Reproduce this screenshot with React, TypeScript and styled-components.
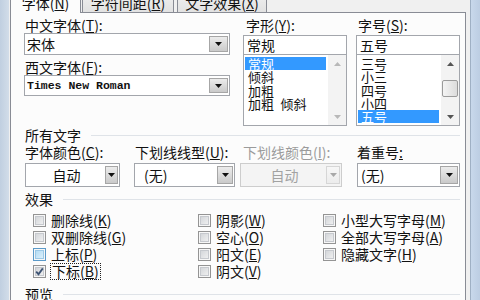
import React from 'react';
import styled, { createGlobalStyle } from 'styled-components';

const Global = createGlobalStyle`
  html, body { margin: 0; padding: 0; }
  body {
    width: 480px; height: 300px; overflow: hidden;
    background: #c5d5e8;
    font-family: "Noto Sans CJK SC", "Noto Sans", sans-serif;
    color: #111;
  }
`;

const Window = styled.div`
  display: flex;
  width: 480px;
  height: 300px;
  overflow: hidden;
`;

const LeftFrame = styled.div`
  flex: none;
  width: 9px;
  background: linear-gradient(90deg, #c0cfe0, #d2dde9);
`;

const RightFrame = styled.div`
  flex: none;
  width: 9px;
  border-left: 1px solid #9fb0c4;
  background: linear-gradient(90deg, #c8d8eb, #bccde2);
`;

const DialogBody = styled.div`
  flex: 1;
  display: flex;
  flex-direction: column;
  background: #f0f0f0;
  padding: 0 4px 0 1px;
`;

const TabStrip = styled.div`
  flex: none;
  height: 12px;
  display: flex;
  align-items: flex-end;
`;

const Tab = styled.div<{ $active?: boolean; $w: number; $ml: number }>`
  flex: none;
  box-sizing: border-box;
  width: ${p => p.$w}px;
  margin-left: ${p => p.$ml}px;
  height: ${p => (p.$active ? 27 : 26)}px;
  margin-bottom: ${p => (p.$active ? -1 : 0)}px;
  position: relative;
  z-index: ${p => (p.$active ? 1 : 0)};
  border: 1px solid #898c95;
  border-bottom: none;
  border-radius: 2px 2px 0 0;
  background: ${p => (p.$active ? '#fcfcfc' : 'linear-gradient(#f4f4f4, #e2e2e2)')};
  display: flex;
  align-items: flex-end;
  justify-content: center;
  padding-bottom: ${p => (p.$active ? 2 : 1)}px;
  font-size: 14px;
  line-height: 15px;
  white-space: nowrap;
`;

const TabPage = styled.div`
  flex: 1;
  box-sizing: border-box;
  border: 1px solid #898c95;
  border-bottom: none;
  background: #fcfcfc;
  padding: 5px 5px 0 13px;
  display: flex;
  flex-direction: column;
`;

const Acc = styled.span`
  text-decoration: underline;
  text-underline-offset: 1px;
`;

const TopRow = styled.div`
  display: flex;
`;

const Col = styled.div<{ $w: number; $ml?: number }>`
  display: flex;
  flex-direction: column;
  flex: none;
  width: ${p => p.$w}px;
  margin-left: ${p => p.$ml ?? 0}px;
`;

const Label = styled.div<{ $mt?: number; $lp?: number; $disabled?: boolean }>`
  height: 15px;
  line-height: 15px;
  font-size: 14px;
  margin-top: ${p => p.$mt ?? 0}px;
  padding-left: ${p => p.$lp ?? 1}px;
  white-space: nowrap;
  color: ${p => (p.$disabled ? '#9b9b9b' : '#111')};
`;

const Combo = styled.div<{ $h: number; $mt?: number; $disabled?: boolean }>`
  box-sizing: border-box;
  display: flex;
  align-items: stretch;
  height: ${p => p.$h}px;
  margin-top: ${p => p.$mt ?? 0}px;
  border: 1px solid ${p => (p.$disabled ? '#cdcdcd' : '#a3a6ac')};
  background: ${p => (p.$disabled ? '#f4f4f4' : '#ffffff')};
  padding: 2px 1px 2px 0;
`;

const ComboText = styled.div<{ $center?: boolean; $pad?: number; $mono?: boolean; $disabled?: boolean }>`
  flex: 1;
  display: flex;
  align-items: center;
  justify-content: ${p => (p.$center ? 'center' : 'flex-start')};
  padding-left: ${p => p.$pad ?? 2}px;
  font-size: ${p => (p.$mono ? '11.5px' : '14px')};
  font-weight: ${p => (p.$mono ? 700 : 400)};
  font-family: ${p => (p.$mono ? '"Liberation Mono", monospace' : 'inherit')};
  color: ${p => (p.$disabled ? '#a2a2a2' : '#111')};
  white-space: nowrap;
  overflow: hidden;
`;

const DropBtn = styled.div<{ $w: number; $disabled?: boolean }>`
  flex: none;
  box-sizing: border-box;
  width: ${p => p.$w}px;
  border: 1px solid ${p => (p.$disabled ? '#d6d6d6' : '#a6a6a6')};
  background: ${p => (p.$disabled ? 'linear-gradient(#f7f7f7, #ececec)' : 'linear-gradient(#ececec, #cacaca)')};
  display: flex;
  align-items: center;
  justify-content: center;
`;

const EditBox = styled.div`
  box-sizing: border-box;
  height: 20px;
  margin-top: 2px;
  border: 1px solid #a3a6ac;
  background: #fff;
  display: flex;
  align-items: center;
  padding-left: 3px;
  font-size: 14px;
`;

const ListBox = styled.div`
  box-sizing: border-box;
  height: 71px;
  display: flex;
  border: 1px solid #a3a6ac;
  border-top: none;
  background: #fff;
`;

const ListItems = styled.div`
  flex: 1;
  padding: 2px 2px 0 1px;
  display: flex;
  flex-direction: column;
`;

const ListItem = styled.div<{ $sel?: boolean }>`
  height: 13.3px;
  line-height: 13.3px;
  font-size: 13px;
  padding-left: 3px;
  white-space: nowrap;
  background: ${p => (p.$sel ? '#3399ff' : 'transparent')};
  color: ${p => (p.$sel ? '#ffffff' : '#111')};
`;

const ScrollBar = styled.div`
  flex: none;
  width: 18px;
  background: #f3f3f3;
  display: flex;
  flex-direction: column;
`;

const ScrollArrow = styled.div<{ $end?: boolean }>`
  height: 17px;
  display: flex;
  align-items: center;
  justify-content: center;
  margin-top: ${p => (p.$end ? 'auto' : '0')};
`;

const Thumb = styled.div<{ $top: number; $h: number }>`
  box-sizing: border-box;
  margin: ${p => p.$top}px 1px 0 1px;
  height: ${p => p.$h}px;
  border: 1px solid #9b9b9b;
  border-radius: 2px;
  background: linear-gradient(90deg, #f4f4f4, #dcdcdc);
`;

const SectionHeader = styled.div<{ $mt: number }>`
  display: flex;
  align-items: center;
  height: 15px;
  line-height: 15px;
  font-size: 14px;
  margin-top: ${p => p.$mt}px;
  padding-left: 1px;
  white-space: nowrap;
`;

const HeaderLine = styled.div`
  flex: 1;
  height: 1px;
  margin-left: 10px;
  background: #dfe3e8;
`;

const BottomRow = styled.div`
  display: flex;
  margin-top: 2px;
`;

const EffectsGrid = styled.div`
  display: grid;
  grid-template-columns: 165px 125px 1fr;
  grid-template-rows: repeat(4, 17px);
  grid-auto-flow: column;
  margin: 5px 0 0 9px;
`;

const CheckItem = styled.div`
  display: flex;
  align-items: center;
  gap: 5px;
  font-size: 14px;
  line-height: 15px;
  white-space: nowrap;
`;

type BoxState = 'normal' | 'hover' | 'checked';

const Box = styled.div<{ $state: BoxState }>`
  flex: none;
  box-sizing: border-box;
  width: 13px;
  height: 13px;
  border: 1px solid ${p => (p.$state === 'hover' ? '#5b9ac9' : '#949494')};
  background: ${p =>
    p.$state === 'hover'
      ? 'linear-gradient(135deg, #a9d7f3, #e6f5fd)'
      : 'linear-gradient(135deg, #cdd0d4, #f6f6f6)'};
  box-shadow: inset 0 0 0 1px #f7f7f7, inset 0 0 0 2px ${p => (p.$state === 'hover' ? '#9cc9e6' : '#c6c9ce')};
  display: flex;
  align-items: center;
  justify-content: center;
`;

const Focus = styled.span`
  outline: 1px dotted #222;
  outline-offset: 0px;
  padding: 0 1px;
`;

const Arrow = ({ color = '#111' }: { color?: string }) => (
  <svg width="7" height="4" viewBox="0 0 7 4">
    <path d="M0 0H7L3.5 4Z" fill={color} />
  </svg>
);

const SmallArrow = ({ up, color }: { up?: boolean; color: string }) => (
  <svg width="7" height="4" viewBox="0 0 7 4">
    <path d={up ? 'M0 4H7L3.5 0Z' : 'M0 0H7L3.5 4Z'} fill={color} />
  </svg>
);

const Check = () => (
  <svg width="9" height="9" viewBox="0 0 9 9">
    <path d="M1.2 4.6L3.5 7.2L7.8 1.4" fill="none" stroke="#3e5474" strokeWidth="1.8" />
  </svg>
);

const effects: { text: string; key: string; state: BoxState; focus?: boolean }[] = [
  { text: '删除线', key: 'K', state: 'normal' },
  { text: '双删除线', key: 'G', state: 'normal' },
  { text: '上标', key: 'P', state: 'hover' },
  { text: '下标', key: 'B', state: 'checked', focus: true },
  { text: '阴影', key: 'W', state: 'normal' },
  { text: '空心', key: 'O', state: 'normal' },
  { text: '阳文', key: 'E', state: 'normal' },
  { text: '阴文', key: 'V', state: 'normal' },
  { text: '小型大写字母', key: 'M', state: 'normal' },
  { text: '全部大写字母', key: 'A', state: 'normal' },
  { text: '隐藏文字', key: 'H', state: 'normal' },
];

export default function App() {
  return (
    <>
      <Global />
      <Window>
        <LeftFrame />
        <DialogBody>
          <TabStrip>
            <Tab $active $w={71} $ml={0}>字体(<Acc>N</Acc>)</Tab>
            <Tab $w={92} $ml={1}>字符间距(<Acc>R</Acc>)</Tab>
            <Tab $w={90} $ml={3}>文字效果(<Acc>X</Acc>)</Tab>
          </TabStrip>
          <TabPage>
            <TopRow>
              <Col $w={206}>
                <Label>中文字体(<Acc>T</Acc>):</Label>
                <Combo $h={22}>
                  <ComboText>宋体</ComboText>
                  <DropBtn $w={19}><Arrow /></DropBtn>
                </Combo>
                <Label $mt={5}>西文字体(<Acc>F</Acc>):</Label>
                <Combo $h={21}>
                  <ComboText $mono $pad={2}>Times New Roman</ComboText>
                  <DropBtn $w={19}><Arrow /></DropBtn>
                </Combo>
              </Col>
              <Col $w={104} $ml={13}>
                <Label $lp={3}>字形(<Acc>Y</Acc>):</Label>
                <EditBox>常规</EditBox>
                <ListBox>
                  <ListItems>
                    <ListItem $sel>常规</ListItem>
                    <ListItem>倾斜</ListItem>
                    <ListItem>加粗</ListItem>
                    <ListItem>加粗{'\u2002'}倾斜</ListItem>
                  </ListItems>
                  <ScrollBar>
                    <ScrollArrow><SmallArrow up color="#b8b8b8" /></ScrollArrow>
                    <ScrollArrow $end><SmallArrow color="#b8b8b8" /></ScrollArrow>
                  </ScrollBar>
                </ListBox>
              </Col>
              <Col $w={104} $ml={9}>
                <Label $lp={2}>字号(<Acc>S</Acc>):</Label>
                <EditBox>五号</EditBox>
                <ListBox>
                  <ListItems>
                    <ListItem>三号</ListItem>
                    <ListItem>小三</ListItem>
                    <ListItem>四号</ListItem>
                    <ListItem>小四</ListItem>
                    <ListItem $sel>五号</ListItem>
                  </ListItems>
                  <ScrollBar>
                    <ScrollArrow><SmallArrow up color="#555" /></ScrollArrow>
                    <Thumb $top={8} $h={17} />
                    <ScrollArrow $end><SmallArrow color="#555" /></ScrollArrow>
                  </ScrollBar>
                </ListBox>
              </Col>
            </TopRow>

            <SectionHeader $mt={2}>所有文字<HeaderLine /></SectionHeader>
            <BottomRow>
              <Col $w={95} $ml={1}>
                <Label $lp={0}>字体颜色(<Acc>C</Acc>):</Label>
                <Combo $h={24} $mt={3}>
                  <ComboText $center>自动</ComboText>
                  <DropBtn $w={13}><Arrow /></DropBtn>
                </Combo>
              </Col>
              <Col $w={101} $ml={14}>
                <Label $lp={1}>下划线线型(<Acc>U</Acc>):</Label>
                <Combo $h={24} $mt={3}>
                  <ComboText $pad={9}>(无)</ComboText>
                  <DropBtn $w={16}><Arrow /></DropBtn>
                </Combo>
              </Col>
              <Col $w={102} $ml={5}>
                <Label $lp={3} $disabled>下划线颜色(<Acc>I</Acc>):</Label>
                <Combo $h={24} $mt={3} $disabled>
                  <ComboText $center $disabled>自动</ComboText>
                  <DropBtn $w={14} $disabled><Arrow color="#a8a8a8" /></DropBtn>
                </Combo>
              </Col>
              <Col $w={103} $ml={15}>
                <Label $lp={0}>着重号<Acc>:</Acc></Label>
                <Combo $h={24} $mt={3}>
                  <ComboText $pad={3}>(无)</ComboText>
                  <DropBtn $w={18}><Arrow /></DropBtn>
                </Combo>
              </Col>
            </BottomRow>

            <SectionHeader $mt={5}>效果<HeaderLine /></SectionHeader>
            <EffectsGrid>
              {effects.map(e => {
                const label = (
                  <>
                    {e.text}(<Acc>{e.key}</Acc>)
                  </>
                );
                return (
                  <CheckItem key={e.key}>
                    <Box $state={e.state}>{e.state === 'checked' && <Check />}</Box>
                    {e.focus ? <Focus>{label}</Focus> : <span>{label}</span>}
                  </CheckItem>
                );
              })}
            </EffectsGrid>

            <SectionHeader $mt={7}>预览<HeaderLine /></SectionHeader>
          </TabPage>
        </DialogBody>
        <RightFrame />
      </Window>
    </>
  );
}
